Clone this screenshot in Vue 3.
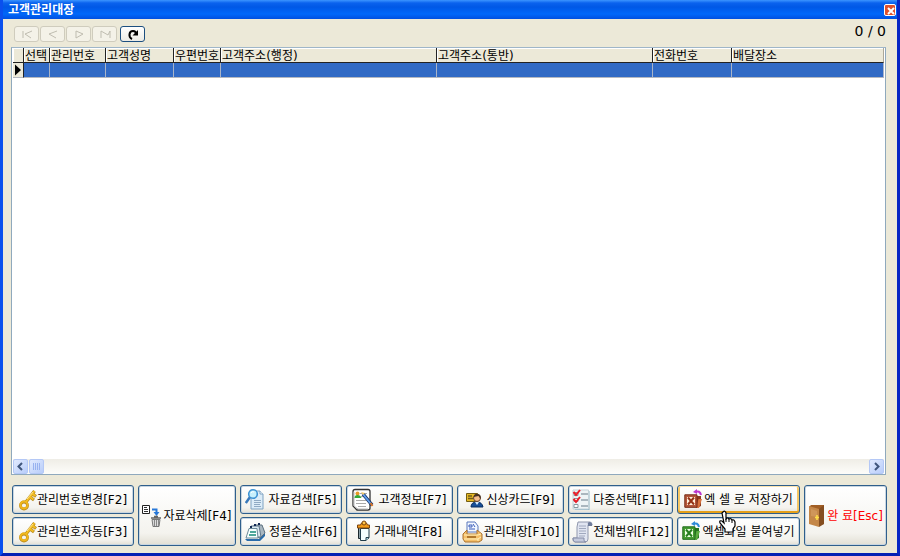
<script setup>
import { ref } from 'vue'

const columns = [
  { label: '선택', size: 'c-select' },
  { label: '관리번호', size: 'c-no' },
  { label: '고객성명', size: 'c-name' },
  { label: '우편번호', size: 'c-zip' },
  { label: '고객주소(행정)', size: 'c-addr' },
  { label: '고객주소(통반)', size: 'c-addr' },
  { label: '전화번호', size: 'c-tel' },
  { label: '배달장소', size: 'c-place' },
]

const navs = [
  { label: '처음', path: 'M8 4v7M17 4l-7 3 6 4' },
  { label: '이전', path: 'M16 4l-8 3 7 4' },
  { label: '다음', path: 'M9 11V4l7 3-7 4' },
  { label: '마지막', path: 'M8 11V4l7 4 2-4v7' },
]

const actions = [
  { label: '관리번호변경[F2]', icon: 'key', w: 18 },
  { label: '관리번호자동[F3]', icon: 'key', w: 18 },
  { label: '자료삭제[F4]', icon: 'trash', w: 21, kind: 'tall' },
  { label: '자료검색[F5]', icon: 'search', w: 23 },
  { label: '정렬순서[F6]', icon: 'sort', w: 24 },
  { label: '고객정보[F7]', icon: 'info', w: 26 },
  { label: '거래내역[F8]', icon: 'clip', w: 17 },
  { label: '신상카드[F9]', icon: 'card', w: 20 },
  { label: '관리대장[F10]', icon: 'ledger', w: 22 },
  { label: '다중선택[F11]', icon: 'check', w: 21 },
  { label: '전체범위[F12]', icon: 'scroll', w: 21 },
  { label: '엑 셀 로 저장하기', icon: 'xsave', w: 20, kind: 'hot' },
  { label: '엑셀화일 붙여넣기', icon: 'xpaste', w: 20 },
  { label: '완 료[Esc]', icon: 'door', w: 19, kind: 'tall exit' },
]

const position = ref('0 / 0')
</script>

<template>
  <main class="window">
    <header class="title-bar">
      <h1>고객관리대장</h1>
      <button class="close" type="button" aria-label="닫기">
        <svg width="12" height="12" viewBox="0 0 12 12"><path d="M3 3l6 6M9 3l-6 6" stroke="#fff" stroke-width="2" /></svg>
      </button>
    </header>

    <div class="body">
      <div class="toolbar">
        <button v-for="n in navs" :key="n.label" class="nav" type="button" disabled :aria-label="n.label">
          <svg width="25" height="15" viewBox="0 0 25 15"><path :d="n.path" fill="none" stroke="#bfbdb0" /></svg>
        </button>
        <button class="nav refresh" type="button" aria-label="새로고침">
          <svg width="25" height="15" viewBox="0 0 25 15">
            <path d="M11 12C7 10 8 4 12 4c2 0 3 1 3 3" fill="none" stroke="#000" stroke-width="2" />
            <path d="M11.500 8.500H17V3z" />
          </svg>
        </button>
        <output class="count">{{ position }}</output>
      </div>

      <section class="sheet">
        <table>
          <colgroup>
            <col class="c-mark" />
            <col v-for="c in columns" :key="c.label" :class="c.size" />
          </colgroup>
          <thead>
            <tr>
              <th></th>
              <th v-for="c in columns" :key="c.label" scope="col">{{ c.label }}</th>
            </tr>
          </thead>
          <tbody>
            <tr>
              <td class="mark">
                <svg width="8" height="12" viewBox="0 0 8 12"><path d="M2 0.500v11L8 6z" /></svg>
              </td>
              <td v-for="c in columns" :key="c.label"></td>
            </tr>
          </tbody>
        </table>
        <div class="scroll">
          <button type="button" class="arrow" aria-label="왼쪽">
            <svg width="13" height="13" viewBox="0 0 13 13"><path d="M8 3L4.500 6.500 8 10" fill="none" stroke="#40567c" stroke-width="2" /></svg>
          </button>
          <div class="thumb">
            <svg width="13" height="13" viewBox="0 0 13 13"><path d="M3.500 3v7M5.500 3v7M7.500 3v7M9.500 3v7" stroke="#98b2f0" /></svg>
          </div>
          <button type="button" class="arrow end" aria-label="오른쪽">
            <svg width="13" height="13" viewBox="0 0 13 13"><path d="M5 3l3.500 3.500L5 10" fill="none" stroke="#40567c" stroke-width="2" /></svg>
          </button>
        </div>
      </section>

      <nav class="actions">
        <button v-for="a in actions" :key="a.label" type="button" class="action" :class="a.kind">
          <svg :width="a.w" height="24" :viewBox="`0 0 ${a.w} 24`" aria-hidden="true">
            <g v-if="a.icon === 'key'" fill="none">
              <path d="M7 14L15.500 3M11 9l4 3M13 5.500l4 3" stroke="#b98a1c" stroke-width="3.200" />
              <circle cx="5" cy="17.500" r="3.500" stroke="#b98a1c" stroke-width="2.800" />
              <circle cx="5" cy="17" r="3.500" stroke="#f0b61c" stroke-width="2" />
              <path d="M7 14L15.500 3M11 9l3.500 2.500M13 5.500l3.500 2.500" stroke="#f3be24" stroke-width="2" />
              <path d="M8 11l6-7" stroke="#ffe58a" />
            </g>
            <g v-else-if="a.icon === 'trash'">
              <path d="M.5 1.500h7v8h-7z" fill="#fff" stroke="#222" />
              <path d="M2 3.500h3M2 5.500h4M2 7.500h4" stroke="#333" />
              <path d="M10 5.500h4.500V9" fill="none" stroke="#2878d8" stroke-width="2" />
              <path d="M11.500 8h6l-3 4z" fill="#2878d8" />
              <path d="M9 14h10M12 12.500h4" stroke="#666" stroke-width="1.500" />
              <path d="M10 15.500h8l-1 7h-6z" fill="#ddd" stroke="#777" />
              <path d="M12.500 16v6M14.500 16v6M16.500 16v6" stroke="#888" />
            </g>
            <g v-else-if="a.icon === 'search'">
              <path d="M8 3h7l3 3v15H6V8z" fill="#dcecf8" stroke="#7fa2c2" />
              <path d="M15 3v3h3" fill="#fff" stroke="#7fa2c2" />
              <path d="M9 12.500h7M9 14.500h7M9 16.500h6M9 18.500h7" stroke="#8faac4" />
              <path d="M5 9L.800 15" stroke="#3878ba" stroke-width="2.500" />
              <circle cx="8" cy="6" r="4.300" fill="#c7f0fd" stroke="#3c92d3" stroke-width="1.600" />
              <path d="M6 5q1-2 3-1" fill="none" stroke="#fff" />
            </g>
            <g v-else-if="a.icon === 'sort'">
              <path d="M0 19h14l6-7v4l-5 5H2z" fill="#2a6cab" />
              <path d="M9 5h8l3 8-5 5-4-1z" fill="#a9b7c1" stroke="#5c7080" />
              <path d="M6 6h8l2 11H8z" fill="#dbe9f0" stroke="#60768a" />
              <path d="M4 8.500h8l1 9.500H1z" fill="#f6ffff" stroke="#6d8a99" />
              <path d="M5 12h6M4 15h7" stroke="#168b7b" stroke-width="1.500" />
              <path d="M6 8V6M10 6V4M14 5V3" stroke="#142a54" stroke-width="2" />
            </g>
            <g v-else-if="a.icon === 'info'">
              <path d="M3 1.500h13q2 0 2 2V20q0 2-2 2H5l-4-4V3.500q0-2 2-2z" fill="#fff" stroke="#333" stroke-width="1.300" />
              <path d="M2 4v14l4 3h10" fill="none" stroke="#bbb" />
              <path d="M8 5.500h7M9 8.500h6M4 12.500h10M4 15.500h10M6 18.500h8" stroke="#aaa" />
              <circle cx="5.500" cy="5.500" r="2" fill="#e69a28" />
              <path d="M2.500 10q0-3 3-3t4 3z" fill="#35a937" />
              <path d="M11 6l9 11" stroke="#152c61" stroke-width="3.500" />
              <path d="M11 6l8 10" stroke="#5d9eeb" stroke-width="2" />
              <path d="M18.500 15l2 3" stroke="#d87528" stroke-width="2" />
              <path d="M9 4l4 1-2 2z" fill="#f6c865" />
            </g>
            <g v-else-if="a.icon === 'clip'">
              <path d="M1.500 7.500h10v11h-10z" fill="#8ca0a8" stroke="#1b282d" />
              <path d="M3.500 8.500h8.500v9l-3 3H3.500z" fill="#f4ffff" stroke="#1f3c48" />
              <path d="M9 20.500v-3h3" fill="#abd9e6" stroke="#26424d" />
              <path d="M.500 5h3l1-2h5l1 2h2v3H.500z" fill="#f49c19" stroke="#7c4510" />
              <circle cx="7" cy="3" r="2" fill="#ffc548" stroke="#7c4510" />
            </g>
            <g v-else-if="a.icon === 'card'">
              <path d="M.500 5.500h11v8H.500z" fill="#e6ba26" stroke="#745d12" />
              <path d="M2 8h4M2 10.500h5" stroke="#725c1b" stroke-width="1.500" />
              <path d="M5 19q0-5 6-5 5 0 6 5z" fill="#174f98" stroke="#0b2e60" />
              <circle cx="11" cy="10" r="3.500" fill="#f4bd8b" stroke="#67432d" />
              <path d="M7.500 9q1-4 5-3 3 1 2 5l-2-3z" fill="#473122" />
              <path d="M9 14l2 3 2-3" fill="#d8edff" />
            </g>
            <g v-else-if="a.icon === 'ledger'">
              <path d="M5 12V2h8l3 4v6z" fill="#f2f7ff" stroke="#5976bc" />
              <path d="M7 5h3v2H7zM7 9h6M11 4l2 3" fill="none" stroke="#385bb9" />
              <path d="M1 14l4-4v4h10v-4l5 4v6l-3 2H3l-2-3z" fill="#f5bf69" stroke="#ac722c" />
              <path d="M2 15h14l3-1M2 19h14v2M16 19l3-2" fill="none" stroke="#fff0ba" />
              <path d="M5 17h9" stroke="#9a601a" stroke-width="1.500" />
            </g>
            <g v-else-if="a.icon === 'check'">
              <path d="M1 3h16.500v19H3" fill="#8cb3c5" />
              <path d="M1 2h15.500v19H1z" fill="#eef4f6" stroke="#c3d3da" />
              <path d="M9 6h7M9 12h7M9 18h7" stroke="#aab7bf" stroke-width="2" />
              <path d="M2 4.500h4v3H2zM2 10.500h4v3H2zM2 16.500h4v3H2z" fill="#fff" stroke="#88989f" />
              <path d="M1.500 4l2.500 3 4-5M1.500 11l2.500 3 4-5" fill="none" stroke="#ee1d28" stroke-width="2" />
            </g>
            <g v-else-if="a.icon === 'scroll'">
              <path d="M6 2h12q2 0 2 3h-4v14q0 3-3 3H3q-3-1-2-4h4V7z" fill="#e1e5f1" stroke="#9198ae" />
              <path d="M16 5q-1-3 2-3 3 1 2 4h-4" fill="#6f7c9b" />
              <path d="M7 6h7M7 8.500h7M7 11h7M7 13.500h7M7 16h6" stroke="#a0a8be" />
              <path d="M1 18h11v2q0 2 2 2H3q-2 0-2-4z" fill="#c4c9dc" stroke="#858da8" />
            </g>
            <g v-else>
              <template v-if="a.icon === 'xsave'">
                <path d="M12 8h5v10l-4 2z" fill="#8d3b1d" />
                <path d="M12 20l2.500-9H18l-3 9z" fill="#d8733e" />
                <path d="M.800 6.800H13v12.500H.800z" fill="#b5573a" stroke="#762b14" />
                <path d="M3 9h8v8H3z" fill="#fff1dc" />
                <path d="M4 9.500l6 7M10 9.500l-6 7" stroke="#963316" stroke-width="2" />
                <path d="M11 4q5-2 6 3" fill="none" stroke="#bd38ce" stroke-width="2" />
                <path d="M9 4l4-3v5z" fill="#bd38ce" />
              </template>
              <template v-else-if="a.icon === 'xpaste'">
                <path d="M12 8h5v10l-4 2z" fill="#25731f" />
                <path d="M12 20l2.500-9H18l-3 9z" fill="#5cad42" />
                <path d="M.800 6.800H13v12.500H.800z" fill="#459c32" stroke="#206b1b" />
                <path d="M3 9h8v8H3z" fill="#efffe5" />
                <path d="M4 9.500l6 7M10 9.500l-6 7" stroke="#257c1e" stroke-width="2" />
                <path d="M11 4q5-2 6 3" fill="none" stroke="#2e8ad9" stroke-width="2" />
                <path d="M9 4l4-3v5z" fill="#2e8ad9" />
              </template>
              <template v-else>
                <path d="M1 3l2-2h13v19l-5 1-10-2z" fill="#a15e24" />
                <path d="M1 2l10 3v18L1 20z" fill="#c48748" />
                <path d="M11 5l5-4v19l-5 3z" fill="#854e20" />
                <path d="M3 5l6 2v6l-6-1z" fill="#cf965a" />
                <path d="M9 11v5M7 13.500h4" stroke="#ffdf46" stroke-width="1.500" />
              </template>
            </g>
          </svg>
          <span>{{ a.label }}</span>
          <svg v-if="a.kind === 'hot'" class="pointer" width="17" height="23" viewBox="0 0 17 23" aria-hidden="true">
            <path d="M4 2q2-2 3 1v6q2-2 3 0 2-1 3 1 2-1 3 2v4l-2 3v3H6v-3l-5-6q-1-3 2-2l2 2L3 3z" fill="#fff" stroke="#000" stroke-width="1.200" />
            <path d="M7 9v3M10 9v3M13 10v3" stroke="#000" />
          </svg>
        </button>
      </nav>
    </div>
  </main>
</template>

<style>
body {
  margin: 0;
}
</style>

<style scoped>
.window {
  box-sizing: border-box;
  min-height: 100vh;
  display: flex;
  flex-direction: column;
  border: solid #0a3fe0;
  border-width: 0 3px 3px;
  border-color: #0831d9 #0726c4 #0420b4 #0a50ee;
  background: #ece9d8;
  font-family: "DejaVu Sans", "Noto Sans CJK KR", sans-serif;
  font-size: 12px;
  line-height: 14px;
  color: #000;
}
button {
  font: inherit;
  color: inherit;
  padding: 0;
}
svg {
  display: block;
  flex: none;
}
.title-bar {
  display: flex;
  align-items: center;
  justify-content: space-between;
  height: 18px;
  padding: 1px 1px 0 5px;
  background: linear-gradient(#3c95ff 0, #0a62ee 3px, #0058e6 7px, #0068fa 14px, #0050e0 19px);
}
h1 {
  margin: 0;
  font-size: 12px;
  line-height: 14px;
  font-weight: bold;
  color: #fff;
}
.close {
  display: grid;
  place-items: center;
  width: 12px;
  height: 12px;
  border: 1px solid #fff;
  border-radius: 2px;
  background: #e0512c;
  box-sizing: border-box;
}
.body {
  flex: 1;
  display: flex;
  flex-direction: column;
  padding: 7px 11px 7px 8px;
}
.toolbar {
  display: flex;
  gap: 1px;
  height: 21px;
  padding-left: 3px;
}
.nav {
  box-sizing: border-box;
  display: grid;
  place-items: center;
  width: 25px;
  height: 16px;
  border: 1px solid #cfccbd;
  border-radius: 3px;
  background: #f4f2e8;
  overflow: hidden;
}
.refresh {
  margin-left: 2px;
  border-color: #1c4f80;
  background: linear-gradient(#fff, #ecebe5);
}
.count {
  margin: -3px 0 0 auto;
  font-size: 14px;
  line-height: 16px;
}
.sheet {
  flex: 1;
  display: flex;
  flex-direction: column;
  margin-bottom: 10px;
  padding: 0 1px;
  border: 1px solid #8fa9bd;
  border-top-color: #9fb6c8;
  background: #fff;
}
table {
  width: 100%;
  table-layout: fixed;
  border-collapse: separate;
  border-spacing: 0;
}
.c-mark { width: 11px; }
.c-select { width: 26px; }
.c-no { width: 56px; }
.c-name { width: 68px; }
.c-zip { width: 47px; }
.c-addr { width: 216px; }
.c-tel { width: 79px; }
th,
td {
  box-sizing: border-box;
  height: 15px;
  padding: 0;
}
th {
  padding: 2px 0 0 1px;
  border-right: 1px solid #222;
  border-bottom: 1px solid #222;
  background: #ece9d8;
  box-shadow: inset 1px 1px #fff;
  font-weight: normal;
  line-height: 12px;
  text-align: left;
  white-space: nowrap;
}
th:last-child {
  border-right-color: #aca899;
}
td {
  border-right: 1px solid #a9b4c8;
  border-bottom: 1px solid #b4b8c0;
  background: #316ac5;
}
.mark {
  border-right-color: #222;
  background: #ece9d8;
}
.scroll {
  display: flex;
  gap: 1px;
  margin-top: auto;
  height: 15px;
  background: linear-gradient(#efede6, #fdfdfa);
}
.arrow,
.thumb {
  box-sizing: border-box;
  display: grid;
  place-items: center;
  width: 15px;
  height: 15px;
  border: 1px solid #b4c8f6;
  border-radius: 2px;
  background: linear-gradient(135deg, #e1eafe, #b8cdfa);
}
.end {
  margin-left: auto;
}
.actions {
  display: grid;
  grid-auto-flow: column;
  grid-template-rows: 29px 29px;
  grid-template-columns: 122fr 98fr 102fr 107fr 107fr 105fr 123fr 83fr;
  gap: 3px 4px;
  margin: 0 -1px 0 1px;
}
.action {
  position: relative;
  display: flex;
  align-items: center;
  justify-content: center;
  min-width: 0;
  border: 1px solid #2f5f8c;
  border-radius: 3px;
  background: linear-gradient(#fff, #f4f3ee 80%, #e2dfd4);
  box-shadow: inset 0 0 0 1px #c9d6e0;
  white-space: nowrap;
}
.tall {
  grid-row: span 2;
}
.hot {
  z-index: 1;
  box-shadow: inset 0 1px #fbe3ae, inset 0 -2px #e5a01a, inset 2px 0 #f5c766, inset -2px 0 #f5c766;
}
.exit {
  color: #f00;
}
.pointer {
  position: absolute;
  left: 41px;
  top: 24px;
}
</style>
